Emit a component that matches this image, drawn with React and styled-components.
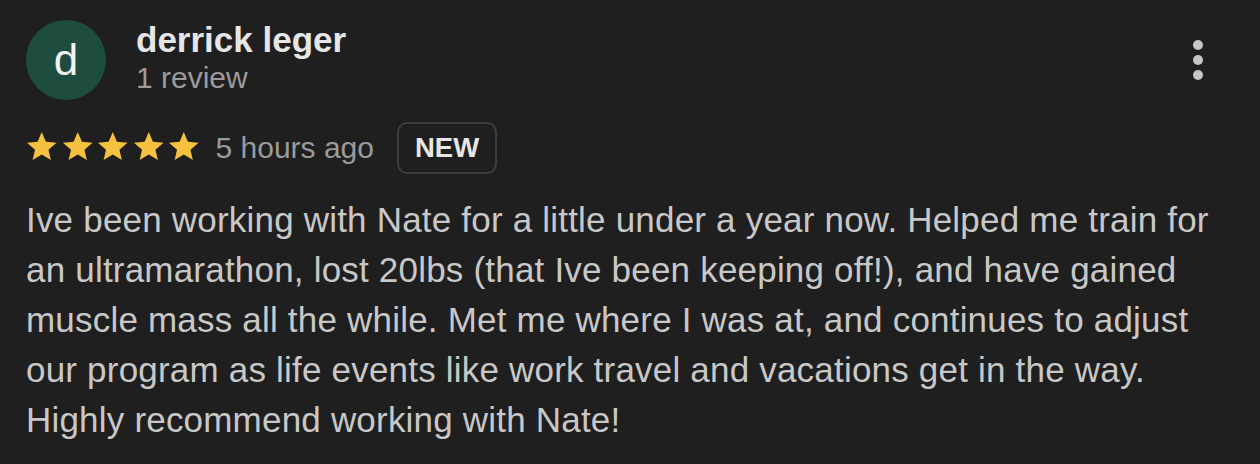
import React from "react";
import styled, { createGlobalStyle } from "styled-components";

const Global = createGlobalStyle`
  html, body { margin: 0; padding: 0; background: #1f1f1f; }
  body { font-family: "Liberation Sans", Arial, Helvetica, sans-serif; -webkit-font-smoothing: antialiased; }
`;

const Card = styled.div`
  box-sizing: border-box;
  width: 1260px;
  height: 464px;
  padding: 20px 44px 0 26px;
  background: #1f1f1f;
  display: flex;
  flex-direction: column;
`;

const Header = styled.div`
  display: flex;
  align-items: center;
  height: 80px;
`;

const Avatar = styled.div`
  width: 80px;
  height: 80px;
  border-radius: 50%;
  background: #1e4d40;
  color: #f2f2f2;
  font-size: 44px;
  line-height: 80px;
  text-align: center;
  flex: none;
  padding-bottom: 4px;
  box-sizing: border-box;
`;

const Who = styled.div`
  display: flex;
  flex-direction: column;
  margin-left: 30px;
  align-self: flex-start;
  flex: 1;
`;

const Name = styled.div`
  font-size: 35px;
  line-height: 40px;
  font-weight: 700;
  color: #e6e6e6;
`;

const Sub = styled.div`
  font-size: 30px;
  line-height: 36px;
  color: #9b9b9b;
`;

const MoreButton = styled.button`
  width: 36px;
  height: 52px;
  border: none;
  background: transparent;
  padding: 0;
  display: flex;
  flex-direction: column;
  align-items: center;
  justify-content: center;
  gap: 5px;
`;

const Dot = styled.span`
  width: 10px;
  height: 10px;
  border-radius: 50%;
  background: #c6c6c6;
`;

const MetaRow = styled.div`
  display: flex;
  align-items: center;
  margin-top: 22px;
  height: 52px;
`;

const Stars = styled.div`
  display: flex;
  margin-left: -2px;
  margin-top: -3px;
`;

const StarSvg = styled.svg`
  width: 35.5px;
  height: 35.5px;
  display: block;
`;

const Time = styled.span`
  font-size: 30px;
  line-height: 36px;
  color: #9b9b9b;
  margin-left: 14px;
`;

const Badge = styled.span`
  box-sizing: border-box;
  height: 52px;
  padding: 0 16px;
  margin-left: 23px;
  border: 2px solid #3d3d3d;
  border-radius: 10px;
  display: flex;
  align-items: center;
  font-size: 27.5px;
  font-weight: 700;
  color: #e6e6e6;
`;

const Body = styled.p`
  margin: 21px 0 0 0;
  font-size: 35px;
  line-height: 50px;
  letter-spacing: 0.2px;
  color: #c8c8c8;
`;

const Star = () => (
  <StarSvg viewBox="0 0 24 24">
    <path
      fill="#f5c13e"
      d="M12 17.27L18.18 21l-1.64-7.03L22 9.24l-7.19-.61L12 2 9.19 8.63 2 9.24l5.46 4.73L5.82 21z"
    />
  </StarSvg>
);

export default function App() {
  return (
    <>
      <Global />
      <Card>
        <Header>
          <Avatar>d</Avatar>
          <Who>
            <Name>derrick leger</Name>
            <Sub>1 review</Sub>
          </Who>
          <MoreButton aria-label="More">
            <Dot />
            <Dot />
            <Dot />
          </MoreButton>
        </Header>
        <MetaRow>
          <Stars>
            {[0, 1, 2, 3, 4].map((i) => (
              <Star key={i} />
            ))}
          </Stars>
          <Time>5 hours ago</Time>
          <Badge>NEW</Badge>
        </MetaRow>
        <Body>
          Ive been working with Nate for a little under a year now. Helped me train for an
          ultramarathon, lost 20lbs (that Ive been keeping off!), and have gained muscle mass all
          the while. Met me where I was at, and continues to adjust our program as life events
          like work travel and vacations get in the way. Highly recommend working with Nate!
        </Body>
      </Card>
    </>
  );
}
